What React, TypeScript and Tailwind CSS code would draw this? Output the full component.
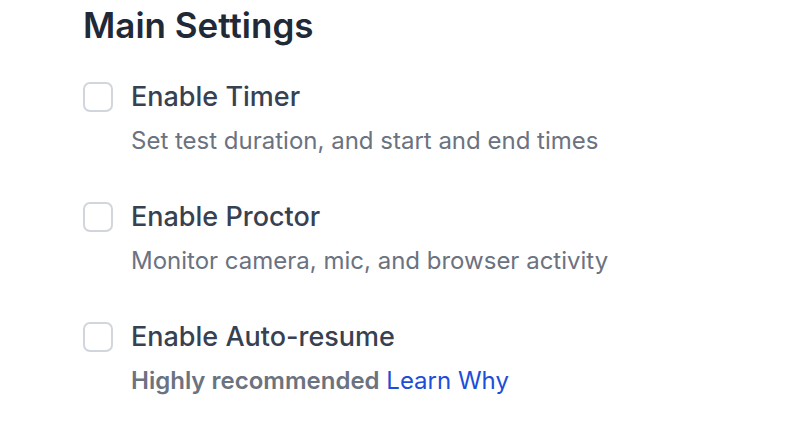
import React, {useState} from 'react'

const items = [
  {title: 'Enable Timer', desc: 'Set test duration, and start and end times'},
  {title: 'Enable Proctor', desc: 'Monitor camera, mic, and browser activity'},
  {title: 'Enable Auto-resume', desc: null},
]

const SettingRow = ({title, desc}: {title: string; desc: string | null}) => {
  const [checked, setChecked] = useState(false)

  return (
    <div className="flex items-start gap-[18px]">
      <button
        onClick={() => setChecked(!checked)}
        className={`mt-[1px] h-[30px] w-[30px] shrink-0 rounded-[7px] border-2 ${
          checked ? 'border-blue-600 bg-blue-600' : 'border-gray-300 bg-white'
        }`}
      />
      <div className="flex flex-col">
        <div className="text-[27px] leading-[32px] font-medium text-[#374151]">{title}</div>
        <div className="mt-[13px] text-[24px] leading-[30px] text-[#6b7280]">
          {desc ?? (
            <>
              <span className="font-semibold">Highly recommended</span>{' '}
              <a href="#" className="text-[#1d4ed8]">
                Learn Why
              </a>
            </>
          )}
        </div>
      </div>
    </div>
  )
}

export default function App() {
  return (
    <div className="min-h-screen bg-white pl-[83px] pt-[4px]" style={{fontFamily: 'Inter, sans-serif'}}>
      <h1 className="text-[35px] leading-[42px] font-semibold text-[#1f2937]">Main Settings</h1>
      <div className="mt-[35px] flex flex-col gap-[45px]">
        {items.map((item) => (
          <SettingRow key={item.title} title={item.title} desc={item.desc} />
        ))}
      </div>
    </div>
  )
}
